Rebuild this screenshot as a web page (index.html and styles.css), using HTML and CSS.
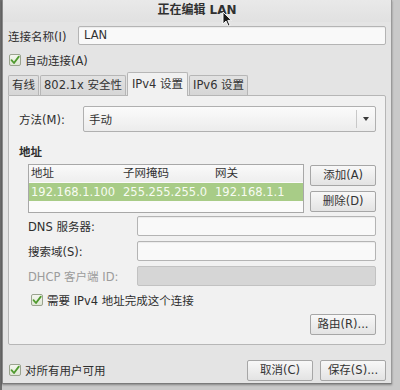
FILE: index.html
```html
<!DOCTYPE html>
<html>
<head>
<meta charset="utf-8">
<link rel="stylesheet" href="styles.css">
</head>
<body>
<div class="win">
  <div class="titlebar">正在编辑 LAN</div>
  <div class="content">
    <div class="name-row">
      <span class="lbl">连接名称(I)</span>
      <div class="entry">LAN</div>
    </div>
    <div class="check-row top-check">
      <span class="cb"><svg viewBox="0 0 12 12" width="12" height="12"><path d="M2.5 6.2 L5 9 L9.8 2.6" fill="none" stroke="#4f9a2e" stroke-width="1.8" stroke-linecap="round" stroke-linejoin="round"/></svg></span>
      <span>自动连接(A)</span>
    </div>
    <div class="tabs">
      <div class="tab">有线</div>
      <div class="tab">802.1x 安全性</div>
      <div class="tab active">IPv4 设置</div>
      <div class="tab">IPv6 设置</div>
    </div>
    <div class="panel">
      <div class="method-row">
        <span class="lbl">方法(M):</span>
        <div class="combo">
          <span class="combo-text">手动</span>
          <span class="combo-sep"></span>
          <span class="combo-arrow"></span>
        </div>
      </div>
      <div class="section">地址</div>
      <div class="addr-row">
        <div class="table">
          <div class="thead">
            <span class="c1">地址</span><span class="c2">子网掩码</span><span class="c3">网关</span>
          </div>
          <div class="trow sel">
            <span class="c1">192.168.1.100</span><span class="c2">255.255.255.0</span><span class="c3">192.168.1.1</span>
          </div>
        </div>
        <div class="btn-col">
          <div class="btn">添加(A)</div>
          <div class="btn">删除(D)</div>
        </div>
      </div>
      <div class="form">
        <div class="frow"><span class="flbl">DNS 服务器:</span><div class="entry"></div></div>
        <div class="frow"><span class="flbl">搜索域(S):</span><div class="entry"></div></div>
        <div class="frow disabled"><span class="flbl">DHCP 客户端 ID:</span><div class="entry dis"></div></div>
      </div>
      <div class="check-row inner-check">
        <span class="cb"><svg viewBox="0 0 12 12" width="12" height="12"><path d="M2.5 6.2 L5 9 L9.8 2.6" fill="none" stroke="#4f9a2e" stroke-width="1.8" stroke-linecap="round" stroke-linejoin="round"/></svg></span>
        <span>需要 IPv4 地址完成这个连接</span>
      </div>
      <div class="route-row">
        <div class="btn">路由(R)...</div>
      </div>
    </div>
    <div class="footer">
      <div class="check-row">
        <span class="cb"><svg viewBox="0 0 12 12" width="12" height="12"><path d="M2.5 6.2 L5 9 L9.8 2.6" fill="none" stroke="#4f9a2e" stroke-width="1.8" stroke-linecap="round" stroke-linejoin="round"/></svg></span>
        <span>对所有用户可用</span>
      </div>
      <div class="footer-btns">
        <div class="btn">取消(C)</div>
        <div class="btn">保存(S)...</div>
      </div>
    </div>
  </div>
  <svg class="cursor" viewBox="0 0 10 16" width="10" height="16"><path d="M1 1 L1 13 L4 10 L6.2 15 L8 14.2 L5.8 9.4 L9.5 9.4 Z" fill="#1a1a1a" stroke="#ffffff" stroke-width="0.9" stroke-linejoin="round"/></svg>
</div>
</body>
</html>
```
FILE: styles.css
```css
html, body {
  margin: 0;
  padding: 0;
}
body {
  width: 400px;
  height: 390px;
  background: #c9c9c9;
  background-image: linear-gradient(to right, #6e6e6e 0, #6e6e6e 2px, transparent 2px);
  font-family: "DejaVu Sans", "Noto Sans CJK SC", sans-serif;
  font-size: 11.5px;
  color: #2e2e2e;
  overflow: hidden;
}
.win {
  position: relative;
  margin-left: 2px;
  width: 390px;
  height: 384px;
  background: #e4e4e4;
  border-left: 1px solid #8a8a8a;
  border-right: 1px solid #9a9a9a;
  border-bottom: 1px solid #7a7a7a;
  box-shadow: 0 1px 2px rgba(0,0,0,0.35);
  box-sizing: border-box;
}
.titlebar {
  height: 22px;
  line-height: 20px;
  text-align: center;
  font-weight: bold;
  font-size: 12px;
  color: #303030;
  background: linear-gradient(#e9e9e9, #e1e1e1);
}
.content {
  padding: 4px 5px 0 4px;
}
.name-row {
  display: flex;
  align-items: center;
  height: 19px;
}
.name-row .lbl {
  width: 70px;
  padding-left: 1px;
}
.entry {
  flex: 1;
  height: 19px;
  box-sizing: border-box;
  border: 1px solid #b4b4b4;
  border-radius: 2px;
  background: #f9f9f9;
  box-shadow: inset 0 1px 1px rgba(0,0,0,0.06);
  padding: 0 5px;
  line-height: 17px;
  color: #333;
}
.entry.dis {
  background: #d6d6d6;
  border-color: #c2c2c2;
  box-shadow: none;
}
.check-row {
  display: flex;
  align-items: center;
  gap: 4px;
}
.top-check {
  height: 22px;
  margin-top: 4px;
  padding-left: 2px;
}
.cb {
  width: 12px;
  height: 12px;
  box-sizing: border-box;
  border: 1px solid #9aa38e;
  border-radius: 2px;
  background: linear-gradient(#f4f6ef, #dfe6d5);
  display: flex;
}
.cb svg {
  margin: -1px;
}
.tabs {
  display: flex;
  align-items: flex-end;
  height: 23px;
  margin-top: 1px;
  padding-left: 1px;
  gap: 1px;
  position: relative;
  z-index: 1;
}
.tab {
  height: 20px;
  line-height: 19px;
  padding: 0 3px;
  background: linear-gradient(#e2e2e2, #d6d6d6);
  border: 1px solid #b6b6b6;
  border-bottom: none;
  border-radius: 2px 2px 0 0;
  box-sizing: border-box;
  color: #333;
}
.tab.active {
  height: 24px;
  line-height: 22px;
  padding: 0 4px;
  background: #f1f1f1;
  margin-bottom: -1px;
}
.panel {
  background: #f1f1f1;
  border: 1px solid #b6b6b6;
  border-radius: 0 2px 2px 2px;
  margin-left: 1px;
  height: 250px;
  box-sizing: border-box;
  padding: 10px 9px 0 10px;
}
.method-row {
  display: flex;
  align-items: center;
  height: 26px;
}
.method-row .lbl {
  width: 64px;
}
.combo {
  flex: 1;
  height: 26px;
  box-sizing: border-box;
  border: 1px solid #b0b0b0;
  border-radius: 2px;
  background: linear-gradient(#fbfbfb, #ececec);
  display: flex;
  align-items: center;
  padding-left: 5px;
}
.combo-text {
  flex: 1;
}
.combo-sep {
  width: 1px;
  height: 18px;
  background: #c8c8c8;
}
.combo-arrow {
  width: 0;
  height: 0;
  margin: 0 6px 0 6px;
  border-left: 3.5px solid transparent;
  border-right: 3.5px solid transparent;
  border-top: 4px solid #3a3a3a;
}
.section {
  font-weight: bold;
  margin-top: 13px;
  height: 14px;
  line-height: 14px;
}
.addr-row {
  display: flex;
  margin-top: 5px;
  padding-left: 9px;
  gap: 6px;
}
.table {
  width: 278px;
  height: 49px;
  box-sizing: border-box;
  border: 1px solid #a8a8a8;
  background: #fbfbfb;
}
.thead, .trow {
  display: flex;
  height: 17px;
  line-height: 17px;
  padding-left: 2px;
}
.thead {
  background: linear-gradient(#fafafa, #eeeeee);
  color: #333;
  margin-bottom: 1px;
}
.trow.sel {
  background: #a8cc87;
  color: #f7fbf2;
  height: 18px;
  line-height: 18px;
}
.c1 { width: 92px; }
.c2 { width: 92px; }
.c3 { width: 80px; }
.btn-col {
  display: flex;
  flex-direction: column;
  gap: 5px;
  width: 66px;
  padding-top: 1px;
}
.btn {
  height: 21px;
  box-sizing: border-box;
  border: 1px solid #a6a6a6;
  border-radius: 2px;
  background: linear-gradient(#f8f8f8, #e3e3e3);
  text-align: center;
  line-height: 19px;
  color: #333;
}
.form {
  margin-top: 3px;
  padding-left: 9px;
  display: flex;
  flex-direction: column;
  gap: 5px;
}
.frow {
  display: flex;
  align-items: center;
  height: 20px;
}
.frow .entry {
  height: 20px;
}
.flbl {
  width: 109px;
}
.frow.disabled .flbl {
  color: #9c9c9c;
}
.inner-check {
  height: 20px;
  margin-top: 4px;
  padding-left: 12px;
}
.route-row {
  display: flex;
  justify-content: flex-end;
  margin-top: 4px;
}
.route-row .btn {
  width: 66px;
}
.footer {
  display: flex;
  align-items: center;
  justify-content: space-between;
  height: 22px;
  margin-top: 14px;
  padding-left: 2px;
}
.footer-btns {
  display: flex;
  gap: 7px;
}
.footer-btns .btn {
  width: 66px;
}
.cursor {
  position: absolute;
  left: 219px;
  top: 11px;
}
```
